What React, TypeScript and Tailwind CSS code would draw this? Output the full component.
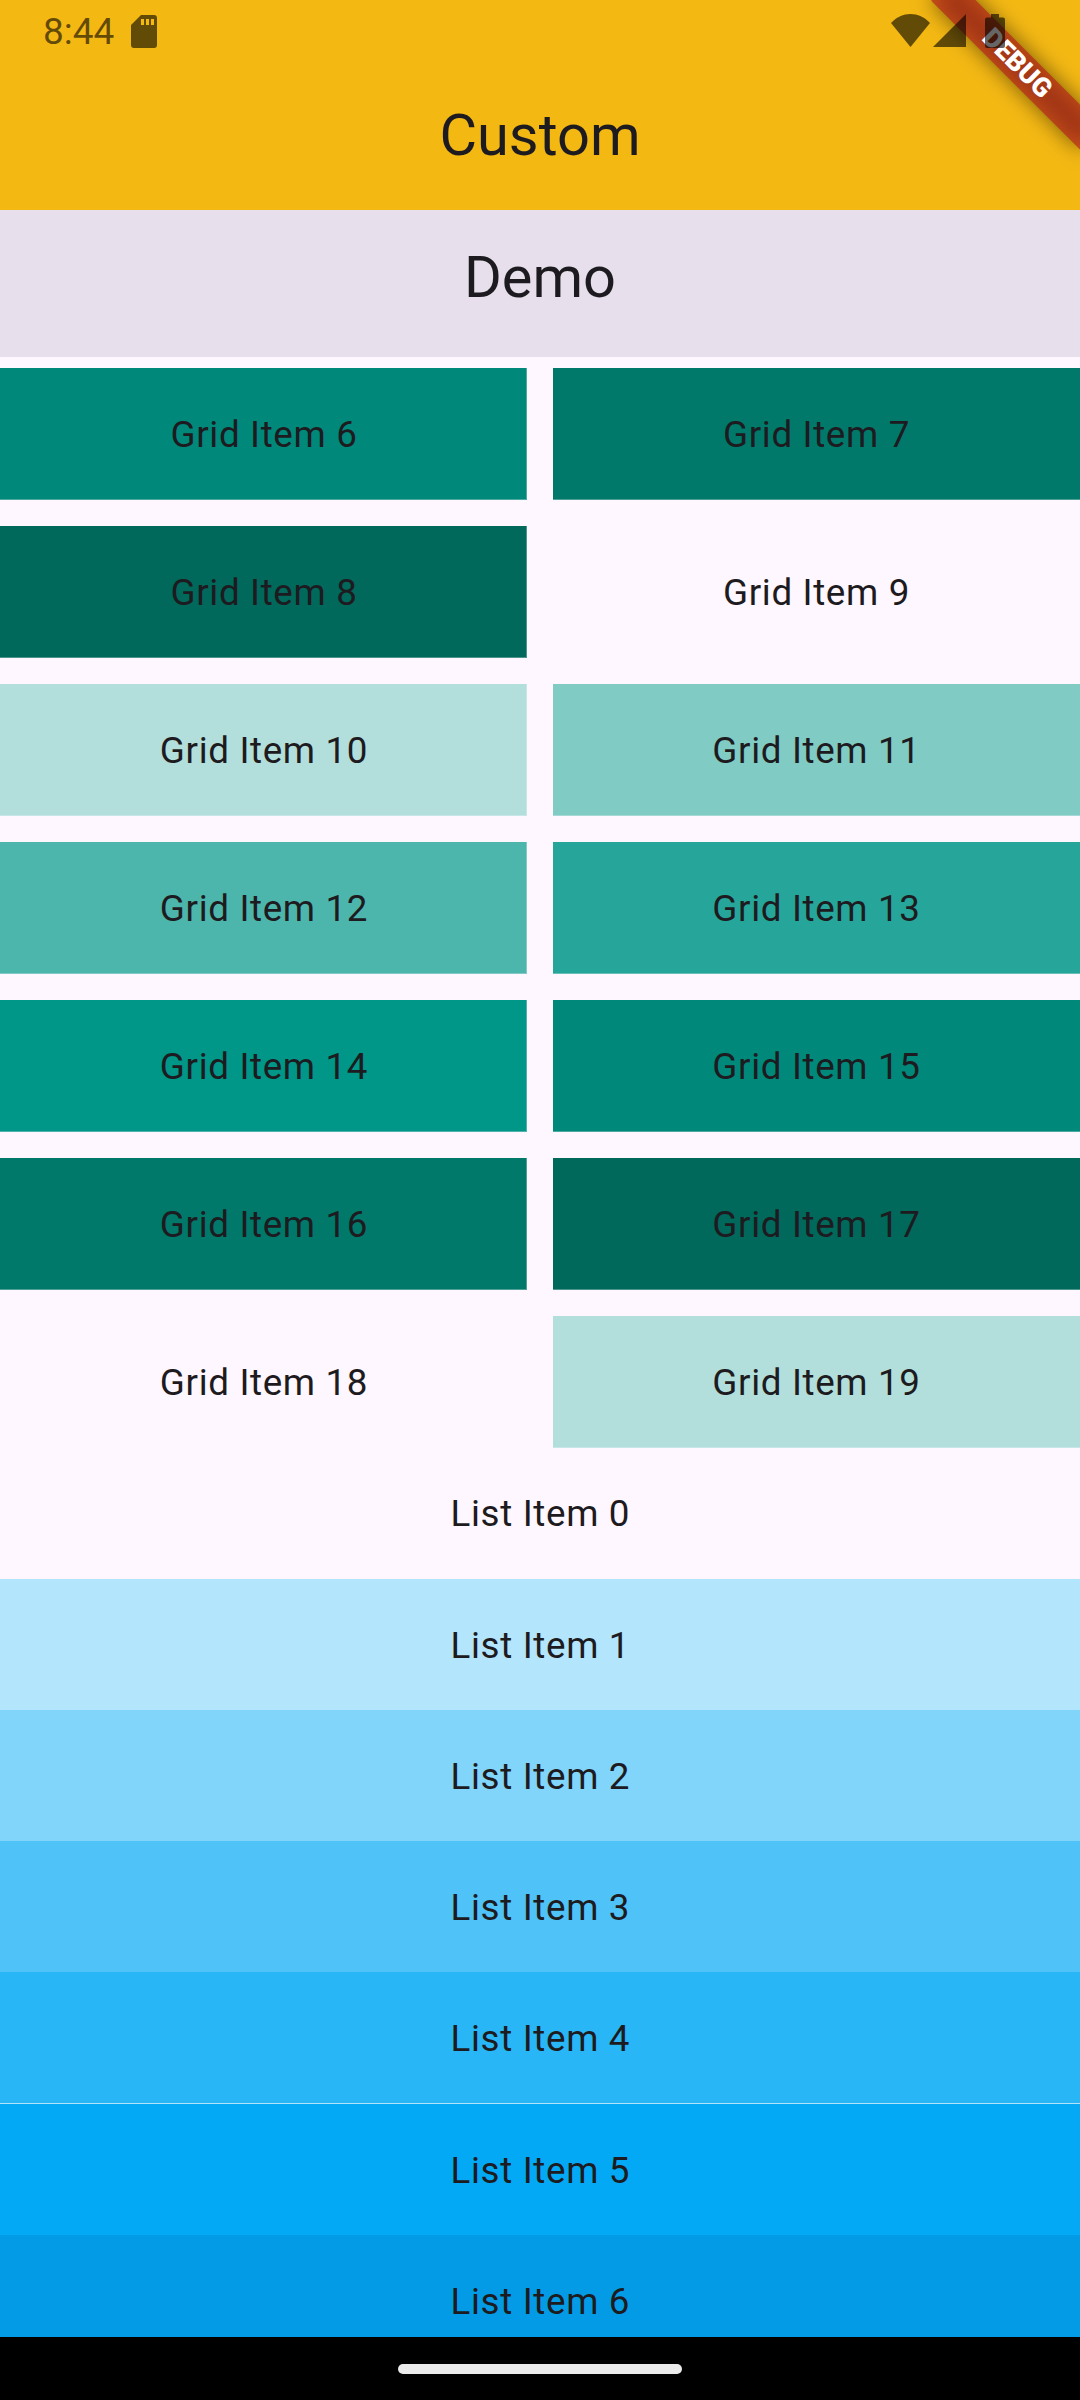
const gridItems = [
  { n: 6, color: "bg-[#00897b]" },
  { n: 7, color: "bg-[#00796b]" },
  { n: 8, color: "bg-[#00695c]" },
  { n: 9, color: "bg-transparent" },
  { n: 10, color: "bg-[#b2dfdb]" },
  { n: 11, color: "bg-[#80cbc4]" },
  { n: 12, color: "bg-[#4db6ac]" },
  { n: 13, color: "bg-[#26a69a]" },
  { n: 14, color: "bg-[#009688]" },
  { n: 15, color: "bg-[#00897b]" },
  { n: 16, color: "bg-[#00796b]" },
  { n: 17, color: "bg-[#00695c]" },
  { n: 18, color: "bg-transparent" },
  { n: 19, color: "bg-[#b2dfdb]" },
];

const listItems = [
  "bg-transparent",
  "bg-[#b3e5fc]",
  "bg-[#81d4fa]",
  "bg-[#4fc3f7]",
  "bg-[#29b6f6] shadow-[inset_0_-1px_0_#b3e2fb]",
  "bg-[#03a9f4]",
  "bg-[#039be5]",
];

function StatusBar() {
  return (
    <div className="absolute inset-x-0 top-0 z-20 h-[63px] text-black/60">
      <div className="flex h-full items-start justify-between pl-[43px] pr-[75px]">
        <div className="flex items-start">
          <span className="mt-[10px] w-[88px] text-[37px] leading-[43px]">8:44</span>
          <svg className="mt-[15px] h-[33px] w-[26px]" viewBox="0 0 26 33" fill="currentColor">
            <path fillRule="evenodd" d="M10 0H23a3 3 0 0 1 3 3V30a3 3 0 0 1-3 3H3a3 3 0 0 1-3-3V10ZM10 4V10H13V4ZM15 4V10H18V4ZM20 4V10H23V4Z" />
          </svg>
        </div>
        <div className="flex items-start">
          <svg className="mt-[14px] mr-[3px] h-[33px] w-[39px]" viewBox="0 0 39 33" fill="currentColor">
            <path d="M0 9C11-3 28-3 39 9L19.500 33Z" />
          </svg>
          <svg className="mt-[14px] mr-[19px] h-[33px] w-[33px]" viewBox="0 0 33 33" fill="currentColor">
            <path d="M33 0V33H0Z" />
          </svg>
          <svg className="mt-[14px] h-[34px] w-[20px]" viewBox="0 0 20 34" fill="currentColor">
            <path d="M6 0H14V3.500H18a2 2 0 0 1 2 2V32a2 2 0 0 1-2 2H2a2 2 0 0 1-2-2V5.500a2 2 0 0 1 2-2H6Z" />
          </svg>
        </div>
      </div>
    </div>
  );
}

function DebugBanner() {
  return (
    <div className="absolute right-[-105px] top-[73.5px] z-10 h-[31.5px] w-[210px] origin-[105px_-73.5px] rotate-45">
      <div className="absolute inset-0 bg-black/50 blur-[10.4px]" />
      <div className="relative flex h-full items-center justify-center bg-[#b71c1c]/63 text-[26.775px] font-black leading-none text-white">
        DEBUG
      </div>
    </div>
  );
}

export default function App() {
  return (
    <div className="relative flex h-[2400px] w-[1080px] flex-col overflow-hidden bg-[#fef7ff] font-[Roboto,sans-serif] text-[#1d1b20]">
      <StatusBar />
      <DebugBanner />
      <header className="flex h-[210px] shrink-0 items-end justify-center bg-[#f4b813] pb-[37px] text-[57.75px] leading-[76px]">
        Custom
      </header>
      <div className="flex h-[147px] shrink-0 items-start justify-center bg-[#e7e0ec] pt-[29px] text-[57.75px] leading-[76px]">
        Demo
      </div>
      <main className="min-h-0 flex-1 overflow-hidden pt-[11px] text-[36.75px] leading-[52px] tracking-[0.656px]">
        <div className="grid grid-cols-[527px_527px] gap-x-[26px] gap-y-[26px]">
          {gridItems.map(({ n, color }) => (
            <div
              key={n}
              className={`flex h-[132px] items-center justify-center border-b border-[#fef7ff]/30 pt-[2px] odd:border-r odd:pl-[2px] ${color}`}
            >
              Grid Item {n}
            </div>
          ))}
        </div>
        <div className="mt-[-0.6px]">
          {listItems.map((color, i) => (
            <div key={i} className={`flex h-[131.25px] items-center justify-center pl-[0.66px] pt-[2.5px] ${color}`}>
              List Item {i}
            </div>
          ))}
        </div>
      </main>
      <footer className="flex h-[63px] shrink-0 items-start justify-center bg-black pt-[27px]">
        <div className="h-[10px] w-[284px] rounded-full bg-[#ebebeb]" />
      </footer>
    </div>
  );
}
